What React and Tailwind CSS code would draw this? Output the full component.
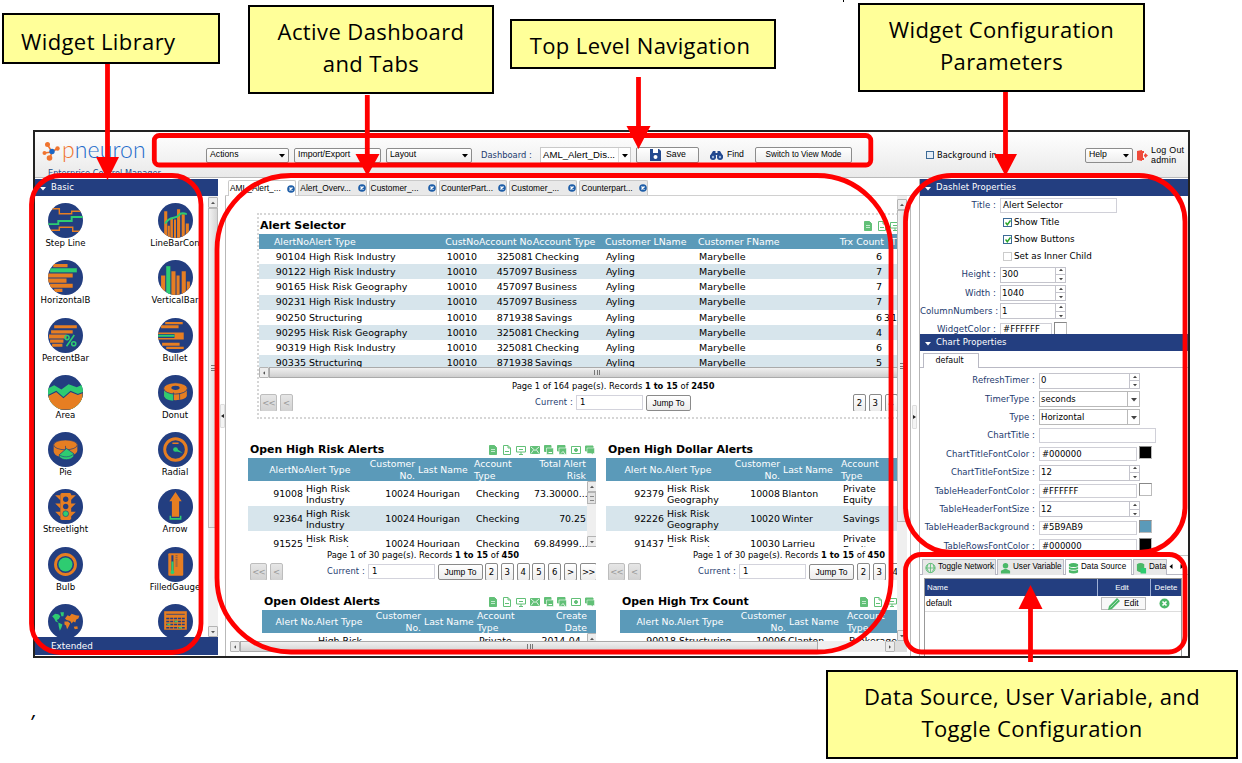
import React from "react";

const NAVY = "#233e80";
const ORANGE = "#e67e22";
const GREEN = "#2ecc71";

/* ---------- widget library icons (34 x 34) ---------- */

function Disc({ id, children }) {
  return (
    <svg width="35" height="35" viewBox="0 0 34 34" className="block">
      <clipPath id={id}>
        <circle cx="17" cy="17" r="17" />
      </clipPath>
      <g clipPath={`url(#${id})`}>
        <rect width="34" height="34" fill={NAVY} />
        {children}
      </g>
    </svg>
  );
}

const art = {
  step: (
    <g fill="none" strokeWidth="1.4">
      <path d="M4 5.500H11V10.500H23V8H33" stroke={ORANGE} />
      <path d="M0 20.500H10V17.500H23V13.500H34" stroke={GREEN} strokeWidth="1.900" />
      <path d="M3 26.500H11V23.500H24V27.500H31" stroke={ORANGE} />
    </g>
  ),
  linebar: (
    <g>
      <path d="M6 8h3v26H6zM12 15h2.500v19H12zM15.500 16h2v18h-2zM18.500 6h3v28h-3zM23 11h3v23h-3zM27 20h3v14h-3zM9.500 22h2v12h-2z" fill={ORANGE} />
      <path d="M7 20C11 12 17 16 20 12S26 11 28 10.500" stroke={GREEN} strokeWidth="1.900" fill="none" />
    </g>
  ),
  hbar: (
    <g fill={ORANGE}>
      <path d="M5 4H19V7H5zM0 13H24V17H0zM0 18H18V22H0zM2 23H24V27H2zM6 28H14V31H6z" />
      <rect x="2" y="8" width="26" height="4" fill={GREEN} />
    </g>
  ),
  vbar: (
    <g fill={ORANGE}>
      <path d="M3 15h4v19H3zM13 11h4v23h-4zM18 15h3v19h-3zM23 11h4v23h-4zM28 21h3v13h-3z" />
      <rect x="8" y="6" width="4" height="28" fill={GREEN} />
    </g>
  ),
  percent: (
    <g fill={ORANGE}>
      <path d="M6 7H28V10H6zM3 12H24V15H3zM1 16H18V20H1zM2 21H15V24H2zM4 25H14V28H4z" />
      <circle cx="18.500" cy="19" r="2" fill="none" stroke={GREEN} strokeWidth="1.500" />
      <circle cx="25" cy="25" r="2" fill="none" stroke={GREEN} strokeWidth="1.500" />
      <path d="M25.500 16.500 18 27.500" stroke={GREEN} strokeWidth="1.500" />
    </g>
  ),
  bullet: (
    <g fill={ORANGE}>
      <path d="M7 4H24V6H7zM3 7H20V10H3zM0 14H25V21H0zM4 24H21V27H4zM8 28H25V30H8z" />
      <path d="M0 15.500H16V19.500H0z" fill={NAVY} />
      <path d="M0 16.300H16V18.300H0z" fill={GREEN} />
    </g>
  ),
  area: (
    <g>
      <path d="M0 13 6 10 13 14 20 9 28 12 34 9V34H0z" fill={GREEN} />
      <path d="M0 20 8 16 15 22 22 16 29 19 34 17V34H0z" fill={ORANGE} stroke={NAVY} strokeWidth="1" />
    </g>
  ),
  donut: (
    <g>
      <path d="M6 13V20C6 26 28 26 28 20V13z" fill={ORANGE} />
      <path d="M6 15V20C6 23 10 25 15 25V18z" fill={GREEN} />
      <ellipse cx="17" cy="13" rx="11.500" ry="5.500" fill={ORANGE} stroke={NAVY} strokeWidth=".8" />
      <ellipse cx="17" cy="12.500" rx="4" ry="2" fill={NAVY} />
      <path d="M15 17V25M21 17.500V24" stroke={NAVY} strokeWidth=".7" />
    </g>
  ),
  pie: (
    <g>
      <path d="M5.500 12V19C6 22 9 24 12 24L17 18 23 23C26 22 28.500 20 28.500 18V12z" fill={ORANGE} />
      <ellipse cx="17" cy="12.500" rx="11.500" ry="4.800" fill={ORANGE} stroke={NAVY} strokeWidth=".7" />
      <path d="M17 13.500V18" stroke={NAVY} strokeWidth=".7" />
      <path d="M18 16 11 22V24C14 28 22 28 25 23.500V21z" fill={GREEN} stroke={NAVY} strokeWidth=".7" />
      <path d="M11 22C14 25 22 25 25 21" fill="none" stroke={NAVY} strokeWidth=".6" />
    </g>
  ),
  radial: (
    <g>
      <circle cx="17" cy="17" r="10.500" fill="none" stroke={ORANGE} strokeWidth="2.800" />
      <path d="M14 11H20" stroke={ORANGE} strokeWidth="1.500" />
      <circle cx="17" cy="17" r="2.300" fill={GREEN} />
      <path d="M17 15.500 24 20.500 16.500 18.500z" fill={GREEN} />
    </g>
  ),
  light: (
    <g fill={ORANGE}>
      <path d="M7 6H12V11zM7 14H12V19zM7 22H12V27zM27 6H22V11zM27 14H22V19zM27 22H22V27z" />
      <rect x="12" y="4" width="10.500" height="26" rx="1.500" />
      <circle cx="17.200" cy="10" r="2.600" fill={NAVY} />
      <circle cx="17.200" cy="17" r="2.600" fill={NAVY} />
      <circle cx="17.200" cy="24" r="2.800" fill={GREEN} stroke={NAVY} strokeWidth=".6" />
    </g>
  ),
  arrow: (
    <g>
      <path d="M17 3 23 12H20.500V27H13.500V12H11z" fill={ORANGE} />
      <path d="M12 26V29H22V26" stroke={GREEN} strokeWidth="1.500" fill="none" />
    </g>
  ),
  bulb: (
    <g>
      <circle cx="17" cy="17" r="9.700" fill="none" stroke={ORANGE} strokeWidth="2.800" />
      <circle cx="17" cy="17" r="6.800" fill={GREEN} />
    </g>
  ),
  gauge: (
    <g>
      <rect x="10" y="6" width="14.500" height="22" rx="1" fill={ORANGE} />
      <path d="M13 8H15V23H13z" fill={NAVY} />
      <path d="M13 14H15V25H13z" fill={GREEN} />
      <circle cx="14" cy="24.500" r="1.800" fill={GREEN} />
      <path d="M18 8V20" stroke={NAVY} strokeWidth="2" strokeDasharray="1 1" opacity=".6" />
    </g>
  ),
  map: (
    <g>
      <path d="M4 12 7 9.500 10 10 12 12 10.500 14.500 8.500 15.500 10 18 7.500 17 6 14z" fill={GREEN} />
      <path d="M12 8 15.500 8 15 12 13 12zM10 18 14 20 13 23 11.500 26 10.500 22z" fill={GREEN} />
      <path d="M16.500 14 19 11 21 12 23 9.500 27 11 30.500 11.500 29.500 14 27.500 15 26.500 18 24.500 17 23 19 21.500 16.500 18 15.500zM16 17H19.500L21.500 19 20 22 18.500 24.500 17.500 21 16 20zM25 22 28.500 21.500 29 24 26 24.500z" fill={ORANGE} />
    </g>
  ),
  grid: (
    <g>
      <rect x="6" y="7" width="22" height="18" fill={ORANGE} />
      <path d="M8 10H26" stroke={NAVY} strokeWidth=".8" />
      <path d="M8 14H26M8 17H26M8 20H26M8 23H26" stroke={NAVY} strokeWidth="1.500" strokeDasharray="3 .8" />
      <path d="M16 17H19M9 20H12M20 23H23" stroke={GREEN} strokeWidth="1.500" />
    </g>
  ),
};

const library = [
  ["step", "Step Line"], ["linebar", "LineBarCon"],
  ["hbar", "HorizontalB"], ["vbar", "VerticalBar"],
  ["percent", "PercentBar"], ["bullet", "Bullet"],
  ["area", "Area"], ["donut", "Donut"],
  ["pie", "Pie"], ["radial", "Radial"],
  ["light", "Streetlight"], ["arrow", "Arrow"],
  ["bulb", "Bulb"], ["gauge", "FilledGauge"],
  ["map", ""], ["grid", ""],
];

/* ---------- small shared pieces ---------- */

function Caret({ dir = "down", className = "" }) {
  const d = { down: "M0 1H6L3 4.500z", up: "M0 4H6L3 .5z", left: "M4.500 0V5L1.500 2.500z", right: "M1.500 0V5L4.500 2.500z" }[dir];
  return (
    <svg width="6" height="5" viewBox="0 0 6 5" className={"shrink-0 " + className}>
      <path d={d} fill="currentColor" />
    </svg>
  );
}

function ScrollButton({ dir }) {
  return (
    <div className="flex h-[11px] w-[10px] shrink-0 items-center justify-center rounded-[1px] border border-[#b4b4b4] bg-[#ececec] text-[#555]">
      <svg width="4" height="4" viewBox="0 0 6 5">
        <path d={{ down: "M0 1H6L3 4.500z", up: "M0 4H6L3 .5z", left: "M4.500 0V5L1.500 2.500z", right: "M1.500 0V5L4.500 2.500z" }[dir]} fill="currentColor" />
      </svg>
    </div>
  );
}

function Glyph({ children }) {
  return (
    <svg width="10" height="10" viewBox="0 0 10 10" className="shrink-0" fill="none" stroke="#62c077" strokeWidth="1">
      {children}
    </svg>
  );
}

const fillG = "#62c077";
const glyphs = [
  <Glyph key="a"><path d="M1.500 .5H6.500L8.500 2.500V9.500H1.500z" fill={fillG} /><path d="M3 4.500H7M3 6.500H7" stroke="#c5ead0" /></Glyph>,
  <Glyph key="b"><path d="M1.500 .5H6L8.500 3V9.500H1.500zM6 .5V3H8.500M3 6.500H7" /></Glyph>,
  <Glyph key="c"><path d="M.5 1.500H9.500V7H.5zM5 7V9.500M3 9.500H7M3 4.500H7" /></Glyph>,
  <Glyph key="d"><path d="M.5 1.500H9.500V8.500H.5z" fill={fillG} /><path d="M1 2 5 5.500 9 2M1 8.500 3.500 5M9 8.500 6.500 5" stroke="#fff" strokeWidth=".8" /></Glyph>,
  <Glyph key="e"><path d="M.5 .5H7V6.500H.5z" fill={fillG} /><path d="M2.500 3H9.500V9.500H2.500z" fill={fillG} stroke="#fff" strokeWidth=".6" /><path d="M4.500 7.500H8" stroke="#fff" /></Glyph>,
  <Glyph key="f"><path d="M.5 .5H8V6H.5z" fill={fillG} /><path d="M2 3H9.500V9.500H2z" fill={fillG} stroke="#fff" strokeWidth=".6" /><path d="M4 8.500 6 6.500 8 9" stroke="#fff" strokeWidth=".8" /></Glyph>,
  <Glyph key="g"><path d="M.5 1.500H9.500V8.500H.5z" /><circle cx="5" cy="5" r="1.500" fill={fillG} /></Glyph>,
  <Glyph key="h"><path d="M.5 1H8V6H.5z" fill={fillG} /><path d="M2 3H9.500V8.500H8V9.500L6 8.500H2z" fill={fillG} stroke="#fff" strokeWidth=".5" /></Glyph>,
];

function PageButton({ children, off, wide }) {
  return (
    <div
      className={
        "flex h-[18px] shrink-0 items-center justify-center rounded-[2px] border text-[8.500px] " +
        (wide ? "w-[17px] tracking-[-0.800px] " : "w-[13px] ") +
        (off
          ? "border-[#bdbdbd] bg-gradient-to-b from-[#e6e6e6] to-[#d2d2d2] text-[#999]"
          : "border-[#8a8a8a] bg-gradient-to-b from-white to-[#ececec] text-black")
      }
    >
      {children}
    </div>
  );
}

function Pager({ lead, pages, gap }) {
  return (
    <div className="flex h-[17px] w-[700px] items-start overflow-hidden font-['DejaVu_Sans']">
      <PageButton off wide>&lt;&lt;</PageButton>
      <div className="ml-[3px]"><PageButton off>&lt;</PageButton></div>
      <div className={"flex h-[17px] shrink-0 items-center justify-end text-[8.300px] tracking-[0.150px] whitespace-nowrap text-[#1c3a6e] " + lead}>Current :</div>
      <div className="mt-px ml-[3px] flex h-[15px] w-[67px] shrink-0 items-center border border-[#d3d3dc] bg-white pl-[3px] text-[8.500px]">1</div>
      <div className="mt-px ml-[3px] flex h-[16px] w-[45px] shrink-0 items-center justify-center rounded-[2px] border border-[#8a8a8a] bg-gradient-to-b from-white to-[#ececec] font-['Liberation_Sans'] text-[8.500px]">Jump To</div>
      <div className={"flex gap-[2.800px] " + gap}>
        {pages.map((p) => <PageButton key={p} wide={p === ">>"}>{p}</PageButton>)}
      </div>
    </div>
  );
}

/* ---------- dashboard widgets ---------- */

const selectorCols = "grid grid-cols-[50px_135px_35px_54px_72px_92px_132px_56px_30px]";
const selectorRows = [
  ["90104", "High Risk Industry", "325081", "Checking", "6"],
  ["90122", "High Risk Industry", "457097", "Business", "7"],
  ["90165", "Hisk Risk Geography", "457097", "Business", "7"],
  ["90231", "High Risk Industry", "457097", "Business", "7"],
  ["90250", "Structuring", "871938", "Savings", "6"],
  ["90295", "Hisk Risk Geography", "325081", "Checking", "4"],
  ["90319", "High Risk Industry", "325081", "Checking", "6"],
  ["90335", "Structuring", "871938", "Savings", "5"],
];

function AlertSelector() {
  return (
    <div className="mt-[17px] ml-[31px] h-[206px] w-[660px] shrink-0 border-2 border-dotted border-[#d6d6d6]">
      <div className="flex h-[19px] items-center pt-[2px]">
        <div className="w-[604px] pl-[1px] text-[11px] leading-[14px] font-bold">Alert Selector</div>
        <div className="flex gap-[3.500px]">{glyphs.slice(0, 3)}</div>
      </div>
      <div className={selectorCols + " h-[15px] items-center bg-[#5b9ab9] text-[9.400px] leading-none whitespace-nowrap text-white"}>
        <span className="text-right">AlertNo</span>
        <span>Alert Type</span>
        <span className="text-right">CustNo</span>
        <span className="text-right tracking-[-0.050px]">Account No.</span>
        <span>Account Type</span>
        <span>Customer LName</span>
        <span className="pl-px">Customer FName</span>
        <span className="pr-px text-right">Trx Count</span>
        <span className="pl-[6px]">T</span>
      </div>
      <div className="h-[118px] overflow-hidden">
        {selectorRows.map((r, i) => (
          <div key={i} className={selectorCols + " h-[15.200px] items-center text-[9.500px] leading-none whitespace-nowrap " + (i % 2 ? "bg-[#d7e5ec]" : "bg-white")}>
            <span className="pr-[3px] text-right">{r[0]}</span>
            <span>{r[1]}</span>
            <span className="pr-[2px] text-right">10010</span>
            <span className="text-right">{r[2]}</span>
            <span className="pl-[2px]">{r[3]}</span>
            <span className="pl-[1px]">Ayling</span>
            <span className="pl-[2px]">Marybelle</span>
            <span className="pr-[3px] text-right">{r[4]}</span>
            <span className="-ml-[1px] tracking-[1px]">{i === 4 ? "31" : ""}</span>
          </div>
        ))}
      </div>
      <div className="flex h-[11px] items-center">
        <ScrollButton dir="left" />
        <div className="flex h-[11px] flex-1 items-center border border-[#aaa] bg-gradient-to-b from-[#f0f0f0] to-[#cfcfcf] pl-[324px]">
          <div className="h-[5px] w-[6px] border-x border-[#777]"><div className="mx-auto h-full w-px bg-[#777]" /></div>
        </div>
      </div>
      <div className="flex h-[16px] items-center pl-[253px] text-[8.350px] whitespace-pre">
        Page 1 of 164 page(s). Records <b>1 to 15</b> of <b>2450</b>
      </div>
      <div className="pl-px">
        <Pager lead="w-[280px]" pages={["2", "3", "4"]} gap="ml-[162px]" />
      </div>
    </div>
  );
}

function SmallTable({ title, width, cols, heads, rows, icons, iconPad, bodyH, scroll }) {
  return (
    <div className={width}>
      <div className="flex h-[18px] items-center justify-between pt-px">
        <div className="pl-[2px] text-[10.880px] leading-[14px] font-bold whitespace-nowrap">{title}</div>
        <div className={"flex gap-[3.800px] " + iconPad}>{glyphs.slice(0, icons)}</div>
      </div>
      <div className={"grid h-[23px] items-center bg-[#5b9ab9] text-[9.300px] leading-[11.500px] whitespace-pre text-white " + cols}>
        {heads.map((h, i) => (
          <span key={i} className={i === 0 || i === 2 || i === 5 ? "text-right" : ""}>{h}</span>
        ))}
      </div>
      <div className={"flex overflow-hidden " + bodyH}>
        <div className="flex-1">
          {rows.map((r, n) => (
            <div key={n} className={"grid h-[25px] items-center text-[9.400px] leading-[11px] whitespace-pre " + cols + (n % 2 ? " bg-[#d7e5ec]" : "")}>
              {r.map((c, i) => (
                <span key={i} className={i === 0 || i === 2 || i === 5 ? (i === 0 ? "pr-px text-right" : "text-right") : "pl-[2px]"}>{c}</span>
              ))}
            </div>
          ))}
        </div>
        {scroll && (
          <div className="flex w-[9px] flex-col bg-[#efefef]">
            <ScrollButton dir="up" />
            <div className="flex h-[12px] items-center justify-center border border-[#b4b4b4] bg-[#e2e2e2]"><div className="h-[5px] w-[4px] border-y border-[#888]" /></div>
            <div className="flex-1" />
            <ScrollButton dir="down" />
          </div>
        )}
      </div>
    </div>
  );
}

const custNo = "Customer\nNo.";
const acct = "Account\nType";
const c1 = "grid-cols-[56px_65px_46px_59px_60px_52px]";
const c2 = "grid-cols-[59px_67px_48px_61px_60px]";
const c3 = "grid-cols-[54px_58px_47px_56px_56px_54px]";
const c4 = "grid-cols-[57px_63px_46px_61px_60px]";

function Records({ pad }) {
  return (
    <div className={"flex h-[16px] items-center text-[8.400px] whitespace-pre " + pad}>
      Page 1 of 30 page(s). Records <b>1 to 15</b> of <b>450</b>
    </div>
  );
}

function Canvas() {
  return (
    <div className="flex h-[445px] w-[671px] flex-col overflow-hidden bg-white font-['DejaVu_Sans',sans-serif] text-black">
      <AlertSelector />
      <div className="mt-[21px] ml-[22px] flex w-[700px] gap-[10px]">
        <div className="w-[348px]">
          <SmallTable
            title="Open High Risk Alerts" width="w-[348px]" cols={c1} icons={8} iconPad="pr-[1px]" bodyH="h-[66px]" scroll
            heads={["AlertNo", "Alert Type", custNo, " Last Name", acct, "Total Alert\nRisk"]}
            rows={[
              ["91008", "High Risk\nIndustry", "10024", "Hourigan", "Checking", "73.30000..."],
              ["92364", "High Risk\nIndustry", "10024", "Hourigan", "Checking", "70.25"],
              ["91525", "Hisk Risk\nGeography", "10024", "Hourigan", "Checking", "69.84999..."],
            ]}
          />
          <Records pad="pl-[79px]" />
          <div className="w-[348px] overflow-hidden pl-[2px]"><Pager lead="w-[82px]" pages={["2", "3", "4", "5", "6", ">", ">>"]} gap="ml-[2px]" /></div>
          <div className="mt-[12px] ml-[14px]">
            <SmallTable
              title="Open Oldest Alerts" width="w-[334px]" cols={c3} icons={8} iconPad="pr-[1px]" bodyH="h-[20px]" scroll
              heads={["Alert No.", "Alert Type", custNo, " Last Name", acct, "Create\nDate"]}
              rows={[["", "High Risk\nIndustry", "", "", "Private\nEquity", "2014-04- \n "]]}
            />
          </div>
        </div>
        <div className="w-[342px]">
          <SmallTable
            title="Open High Dollar Alerts" width="w-[320px]" cols={c2} icons={0} iconPad="" bodyH="h-[66px]"
            heads={["Alert No.", "Alert Type", custNo, " Last Name", acct]}
            rows={[
              ["92379", "Hisk Risk\nGeography", "10008", "Blanton", "Private\nEquity"],
              ["92226", "Hisk Risk\nGeography", "10020", "Winter", "Savings"],
              ["91437", "Hisk Risk\nGeography", "10030", "Larrieu", "Private\nEquity"],
            ]}
          />
          <Records pad="pl-[87px]" />
          <div className="pl-[2px]"><Pager lead="w-[95px]" pages={["2", "3", "4"]} gap="ml-[3px]" /></div>
          <div className="mt-[12px] ml-[14px]">
            <SmallTable
              title="Open High Trx Count" width="w-[320px]" cols={c4} icons={3} iconPad="pr-[43px]" bodyH="h-[20px]"
              heads={["Alert No.", "Alert Type", custNo, " Last Name", acct]}
              rows={[["90018\n ", "Structuring\n ", "10006\n ", "Clanton\n ", "Brokerage\n "]]}
            />
          </div>
        </div>
      </div>
    </div>
  );
}

/* ---------- top bar ---------- */

function NavSelect({ label, w }) {
  return (
    <div className={"flex h-[15px] items-center justify-between rounded-[2px] border border-[#8c8c8c] bg-gradient-to-b from-white to-[#eee] px-[3px] " + w}>
      <span>{label}</span>
      <Caret />
    </div>
  );
}

function TopBar() {
  return (
    <header className="flex h-[46px] shrink-0 border-b border-[#b9b9b9] bg-gradient-to-b from-white to-[#e9e9e9] font-['Liberation_Sans',sans-serif] text-[8.700px] text-black">
      <div className="flex w-[171px] flex-col overflow-hidden pl-[7px]">
        <div className="flex h-[37px] items-center">
          <svg width="19" height="21" viewBox="0 0 19 21" className="mt-[1px]" fill="none">
            <path d="M5 3 10 11 16 7M10 11 2 12M10 11 8 17" stroke="#f0742f" strokeWidth="1.600" />
            <circle cx="5.500" cy="3.500" r="2.500" fill="#f0742f" />
            <circle cx="15.500" cy="7.500" r="2.200" fill="#f0742f" />
            <circle cx="2.500" cy="12" r="2" fill="#f0742f" />
            <circle cx="7.500" cy="17" r="2.800" fill="#f0742f" />
            <circle cx="10" cy="10.500" r="2.700" fill="#1b66c4" />
          </svg>
          <div className="-mt-[3px] ml-[1px] font-['Lato'] text-[23px] leading-none font-light tracking-[0.100px] text-[#1f6dcb]">
            <span className="text-[#f0742f]">p</span>neuron
          </div>
        </div>
        <div className="-mt-px h-[8px] overflow-hidden pl-[6px] font-['DejaVu_Sans'] text-[8.200px] leading-[10px] whitespace-nowrap text-[#1d4a86]">Enterprise Control Manager</div>
      </div>
      <div className="mt-[15px] flex h-[16px] items-center gap-[5px]">
        <NavSelect label="Actions" w="w-[83px]" />
        <NavSelect label="Import/Export" w="w-[87px]" />
        <NavSelect label="Layout" w="w-[86px]" />
      </div>
      <div className="mt-[15px] ml-[9px] flex h-[16px] items-center">
        <span className="w-[59px] font-['DejaVu_Sans'] text-[8.350px] whitespace-nowrap text-[#1c3a6e]">Dashboard :</span>
        <div className="flex h-[16px] w-[91px] items-center border border-[#c9c9c9] bg-white">
          <span className="w-[77px] pl-[2px] text-[9.600px] whitespace-nowrap">AML_Alert_Dis...</span>
          <span className="flex h-full flex-1 items-center justify-center border-l border-[#ddd]"><Caret /></span>
        </div>
        <div className="ml-[5px] flex h-[16px] w-[63px] items-center rounded-[2px] border border-[#8c8c8c] bg-gradient-to-b from-white to-[#eee] pl-[13px]">
          <svg width="11" height="12" viewBox="0 0 11 12"><path d="M0 0H9L11 2V12H0z" fill="#23498f" /><path d="M3 0H8V4H3z" fill="#fff" /><circle cx="5.500" cy="8" r="2" fill="#fff" /></svg>
          <span className="ml-[5px]">Save</span>
        </div>
        <svg width="13" height="10" viewBox="0 0 13 10" className="ml-[11px]" fill="#23498f"><path d="M3 1H5.500V3H7.500V1H10L13 6V8H7.500V5H5.500V8H0V6z" /><circle cx="3" cy="7" r="3" /><circle cx="10" cy="7" r="3" /><circle cx="3" cy="7" r="1.200" fill="#9cb8df" /><circle cx="10" cy="7" r="1.200" fill="#9cb8df" /></svg>
        <span className="ml-[4px] w-[22px]">Find</span>
        <div className="ml-[6px] flex h-[16px] w-[97px] items-center justify-center rounded-[2px] border border-[#8c8c8c] bg-gradient-to-b from-white to-[#eee] text-[8.200px] whitespace-nowrap">Switch to View Mode</div>
      </div>
      <div className="mt-[15px] ml-[74px] flex h-[16px] items-center">
        <span className="h-[8px] w-[8px] border border-[#3c6a96] bg-[#e6eef6]" />
        <span className="ml-[3px] w-[62px] overflow-hidden font-['DejaVu_Sans'] text-[8.300px] whitespace-nowrap">Background in</span>
      </div>
      <div className="mt-[15px] ml-[86px] flex h-[16px] items-center">
        <NavSelect label="Help" w="w-[48px]" />
        <svg width="11" height="11" viewBox="0 0 11 11" className="ml-[4px]" fill="#ef4a3a"><path d="M0 1 5 0V11L0 10zM5 1H7V3H6V8H7V10H5zM7 4.500H8V3L11 5.500 8 8V6.500H7z" /></svg>
        <div className="ml-[3px] text-[8.900px] leading-[10px] tracking-[0.250px] whitespace-nowrap">Log Out<br />admin</div>
      </div>
    </header>
  );
}

/* ---------- property panels ---------- */

function PanelBar({ title }) {
  return (
    <div className="flex h-[17px] shrink-0 items-center bg-[#233e80] pl-[5px] font-['DejaVu_Sans'] text-[8.500px] text-white">
      <Caret className="mt-px" />
      <span className="ml-[5px] tracking-[0.100px]">{title}</span>
    </div>
  );
}

function Spin({ value, w }) {
  return (
    <div className={"flex h-[16px] border border-[#c4c4cc] bg-white " + w}>
      <span className="flex flex-1 items-center pl-[1px]">{value}</span>
      <span className="flex w-[10px] flex-col items-center justify-around border-l border-[#c4c4cc] text-[#444]">
        <svg width="4" height="4" viewBox="0 0 6 5"><path d="M0 4H6L3 .5z" fill="currentColor" /></svg>
        <i className="block h-px w-full bg-[#c4c4cc]" />
        <svg width="4" height="4" viewBox="0 0 6 5"><path d="M0 1H6L3 4.500z" fill="currentColor" /></svg>
      </span>
    </div>
  );
}

function Combo({ value }) {
  return (
    <div className="flex h-[16px] w-[101px] border border-[#b9b9b9] bg-white">
      <span className="flex flex-1 items-center pl-[1px]">{value}</span>
      <span className="flex w-[12px] items-center justify-center border-l border-[#b9b9b9] text-[#444]"><Caret /></span>
    </div>
  );
}

function Swatch({ value, w, color }) {
  return (
    <div className="flex">
      <div className={"flex h-[14px] items-center border border-[#cfcfd6] pl-[2px] " + w}>{value}</div>
      <div className={"-mt-px ml-[2px] h-[13px] w-[13px] border border-t-[#888] border-l-[#888] border-[#bbb] " + color} />
    </div>
  );
}

function Field({ label, labelW, children }) {
  return (
    <div className="flex h-[18.400px] shrink-0 items-center">
      <span className={"shrink-0 text-right tracking-[0.050px] whitespace-nowrap text-[#1c3a6e] " + labelW}>{label} :</span>
      <div className="ml-[4px]">{children}</div>
    </div>
  );
}

function Check({ label, on }) {
  return (
    <div className="flex h-[17px] shrink-0 items-center pl-[83px]">
      <span className={"flex h-[9px] w-[9px] items-center justify-center border bg-white " + (on ? "border-[#3c6a96]" : "border-[#ccc]")}>
        {on && <svg width="6" height="6" viewBox="0 0 6 6"><path d="M.5 2.500 2.300 4.800 5.500 .5" stroke="#2ba52b" strokeWidth="1.500" fill="none" /></svg>}
      </span>
      <span className="ml-[2px] text-[8.800px]">{label}</span>
    </div>
  );
}

function Properties() {
  return (
    <aside className="flex w-[269px] shrink-0 flex-col border-l border-[#b5b5b5] bg-white font-['DejaVu_Sans',sans-serif] text-[8.800px] text-black">
      <PanelBar title="Dashlet Properties" />
      <div className="flex h-[138px] flex-col overflow-hidden text-[8.600px]">
        <Field label="Title" labelW="w-[76px]"><div className="flex h-[15px] w-[117px] items-center border border-[#d0d0d8] pl-[2px] text-[8.800px]">Alert Selector</div></Field>
        <Check label="Show Title" on />
        <Check label="Show Buttons" on />
        <Check label="Set as Inner Child" />
        <Field label="Height" labelW="w-[76px]"><Spin value="300" w="w-[66px]" /></Field>
        <Field label="Width" labelW="w-[76px]"><Spin value="1040" w="w-[66px]" /></Field>
        <Field label="ColumnNumbers" labelW="w-[76px] tracking-[-0.050px]"><Spin value="1" w="w-[66px]" /></Field>
        <Field label="WidgetColor" labelW="w-[76px]"><Swatch value="#FFFFFF" w="w-[52px]" color="bg-white" /></Field>
      </div>
      <PanelBar title="Chart Properties" />
      <div className="flex h-[17px] shrink-0 items-end border-b border-[#b9b9c4] pl-[3px]">
        <div className="-mb-px flex h-[15px] w-[56px] items-center justify-center rounded-t-[1px] border border-b-0 border-[#b9b9c4] bg-white pr-[3px] text-[8px]">default</div>
      </div>
      <div className="flex h-[188px] shrink-0 flex-col overflow-hidden border-b border-[#c5c5c5] pt-[3.500px] text-[8.500px]">
        <Field label="RefreshTimer" labelW="w-[115px]"><Spin value="0" w="w-[101px]" /></Field>
        <Field label="TimerType" labelW="w-[115px]"><Combo value="seconds" /></Field>
        <Field label="Type" labelW="w-[115px]"><Combo value="Horizontal" /></Field>
        <Field label="ChartTitle" labelW="w-[115px]"><div className="h-[15px] w-[117px] border border-[#d0d0d8]" /></Field>
        <Field label="ChartTitleFontColor" labelW="w-[115px]"><Swatch value="#000000" w="w-[98px]" color="bg-black" /></Field>
        <Field label="ChartTitleFontSize" labelW="w-[115px]"><Spin value="12" w="w-[101px]" /></Field>
        <Field label="TableHeaderFontColor" labelW="w-[115px]"><Swatch value="#FFFFFF" w="w-[98px]" color="bg-white" /></Field>
        <Field label="TableHeaderFontSize" labelW="w-[115px]"><Spin value="12" w="w-[101px]" /></Field>
        <Field label="TableHeaderBackground" labelW="w-[115px]"><Swatch value="#5B9AB9" w="w-[98px]" color="bg-[#5b9ab9]" /></Field>
        <Field label="TableRowsFontColor" labelW="w-[115px]"><Swatch value="#000000" w="w-[98px]" color="bg-black" /></Field>
      </div>
      <DataTabs />
    </aside>
  );
}

function DataTab({ label, w, active, children }) {
  return (
    <div className={"-mb-px flex h-[16px] shrink-0 items-center overflow-hidden rounded-t-[1px] border border-b-0 border-[#b9b9c4] pl-[2px] " + w + (active ? " bg-white" : " bg-[#e8e8e8]")}>
      <svg width="11" height="12" viewBox="0 0 12 12" className="shrink-0">{children}</svg>
      <span className="ml-[2px] whitespace-nowrap">{label}</span>
    </div>
  );
}

function DataTabs() {
  const g = "#4bb868";
  return (
    <div className="flex flex-1 flex-col overflow-hidden font-['Liberation_Sans',sans-serif] text-[8.500px]">
      <div className="mt-[2px] flex h-[17px] shrink-0 items-end gap-px border-b border-[#b9b9c4] pl-[2px] text-[8.150px]">
        <DataTab label="Toggle Network" w="w-[74px]">
          <circle cx="6" cy="6" r="5" fill="none" stroke={g} /><path d="M1 6H11M6 1V11M3 2.500Q.5 6 4 10M9 2.500Q11.500 6 8 10" stroke={g} fill="none" strokeWidth=".8" />
        </DataTab>
        <DataTab label="User Variable" w="w-[67px]">
          <circle cx="6" cy="3.500" r="3" fill={g} /><path d="M1 12V9L5 7H7L11 9V12z" fill={g} />
        </DataTab>
        <DataTab label="Data Source" w="w-[67px]" active>
          <path d="M1 2Q6-1 11 2V4Q6 6 1 4zM1 5Q6 7 11 5V7Q6 9 1 7zM1 8Q6 10 11 8V11Q6 13 1 11z" fill={g} />
        </DataTab>
        <DataTab label="Data" w="w-[34px]">
          <path d="M1 2Q5-1 9 2V9Q5 12 1 9z" fill={g} /><path d="M5 6H11V12H5z" fill={GREEN} />
        </DataTab>
        <div className="flex h-[16px] shrink-0 items-center gap-[5px] text-black"><Caret dir="left" /><Caret dir="right" /></div>
      </div>
      <div className="mt-[3px] mr-[6px] ml-[4px] flex flex-1 flex-col border-x border-t border-[#999]">
        <div className="grid h-[17px] shrink-0 grid-cols-[172px_54px_31px] items-center bg-[#233e80] text-[7.900px] text-white">
          <span className="pl-[2px]">Name</span>
          <span className="flex h-full items-center justify-center border-x border-[#9fb0d5] pr-[4px]">Edit</span>
          <span className="-ml-px text-center">Delete</span>
        </div>
        <div className="grid h-[16px] shrink-0 grid-cols-[172px_54px_31px] items-center border-b border-[#ddd]">
          <span className="pl-[1px]">default</span>
          <span className="ml-[4px] flex h-[13px] w-[45px] items-center border border-[#bbb] bg-[#f8f8f8] pl-[6px]">
            <svg width="12" height="12" viewBox="0 0 12 12"><path d="M0 12 1 8 9 0 12 3 4 11z" fill={g} /><path d="M2.500 9.500 10 2" stroke="#c8ecd2" strokeWidth=".8" /></svg>
            <span className="ml-[4px]">Edit</span>
          </span>
          <span className="-ml-[4px] flex justify-center">
            <svg width="11" height="11" viewBox="0 0 11 11"><circle cx="5.500" cy="5.500" r="5" fill={g} /><path d="M3.500 3.500 7.500 7.500M7.500 3.500 3.500 7.500" stroke="#fff" strokeWidth="1.700" /></svg>
          </span>
        </div>
      </div>
    </div>
  );
}

/* ---------- left and centre columns ---------- */

function Library() {
  return (
    <aside className="flex w-[183px] shrink-0 flex-col bg-white font-['DejaVu_Sans',sans-serif]">
      <PanelBar title="Basic" />
      <div className="flex h-[441px] shrink-0">
        <div className="grid w-[173px] grid-cols-[61px_110px] content-start overflow-hidden pt-[7px]">
          {library.map(([k, label]) => (
            <div key={k} className="flex h-[57.300px] flex-col items-center overflow-visible odd:w-[61px] even:w-[158px]">
              <Disc id={"disc-" + k}>{art[k]}</Disc>
              <span className="text-[8.600px] leading-[11px] whitespace-nowrap">{label}</span>
            </div>
          ))}
        </div>
        <div className="flex w-[10px] flex-col bg-[#f0f0f0] pt-px">
          <ScrollButton dir="up" />
          <div className="flex h-[320px] items-center justify-center border border-[#b9b9b9] bg-gradient-to-r from-[#f2f2f2] to-[#d6d6d6]">
            <div className="h-[6px] w-[4px] border-y border-[#777]"><div className="mt-[1.500px] h-px bg-[#777]" /></div>
          </div>
          <div className="flex-1" />
          <ScrollButton dir="down" />
        </div>
      </div>
      <div className="flex h-[18px] shrink-0 items-center bg-[#233e80] pt-px pl-[16px] text-[8.800px] text-white">Extended</div>
    </aside>
  );
}

const tabNames = ["AML_Alert_...", "Alert_Overv...", "Customer_...", "CounterPart...", "Customer_...", "Counterpart..."];

function Center() {
  return (
    <main className="flex w-[686px] shrink-0 flex-col bg-white">
      <div className="flex h-[17px] shrink-0 items-end gap-[2px] border-b border-[#d0d0d0] pl-[3px] font-['Liberation_Sans',sans-serif] text-[8.400px]">
        {tabNames.map((t, i) => (
          <div key={i} className={"flex w-[68.300px] items-center justify-between rounded-t-[2px] border border-b-0 border-[#c9c9c9] pl-[1px] " + (i ? "h-[15px] bg-[#e9e9e9]" : "-mb-px h-[16px] bg-white")}>
            <span>{t}</span>
            <svg width="8" height="8" viewBox="0 0 9 9"><circle cx="4.500" cy="4.500" r="4.300" fill="#1e5ea8" /><path d="M2.800 2.800 6.200 6.200M6.200 2.800 2.800 6.200" stroke="#fff" strokeWidth="1.500" /></svg>
          </div>
        ))}
      </div>
      <div className="flex h-[445px] shrink-0 border-l border-[#b9b9b9]">
        <Canvas />
        <div className="flex w-[10px] flex-col bg-[#efefef] pt-[3px]">
          <ScrollButton dir="up" />
          <div className="flex h-[312px] items-center justify-center border border-[#b9b9b9] bg-gradient-to-r from-[#f2f2f2] to-[#d9d9d9]">
            <div className="h-[6px] w-[4px] border-y border-[#777]"><div className="mt-[1.500px] h-px bg-[#777]" /></div>
          </div>
          <div className="flex-1" />
          <ScrollButton dir="down" />
        </div>
        <div className="w-[4px] border-r border-[#b9b9b9]" />
      </div>
      <div className="flex flex-1 items-start border-l border-[#b9b9b9] pl-[4px]">
        <ScrollButton dir="left" />
        <div className="flex h-[11px] w-[579px] items-center justify-center border border-[#aaa] bg-gradient-to-b from-[#f0f0f0] to-[#d4d4d4] pl-[2px]">
          <div className="h-[5px] w-[6px] border-x border-[#777]"><div className="mx-auto h-full w-px bg-[#777]" /></div>
        </div>
        <div className="h-[11px] w-[67px] bg-[#efefef]" />
        <ScrollButton dir="right" />
        <div className="h-[11px] w-[12px] bg-[#ddd]" />
        <div className="h-full w-[4px] border-r border-[#b9b9b9]" />
      </div>
    </main>
  );
}

function Splitter({ dir, w, pad }) {
  return (
    <div className={"flex shrink-0 bg-white " + w + " " + pad}>
      <div className="flex h-[24px] w-[5px] items-center rounded-[1px] border border-[#ddd] bg-[#f4f4f4]">
        <svg width="3" height="4" viewBox="0 0 3 4"><path d={dir === "left" ? "M3 0V4L0 2z" : "M0 0V4L3 2z"} fill="#222" /></svg>
      </div>
    </div>
  );
}

/* ---------- callouts over the application ---------- */

function Callout({ className, children }) {
  return (
    <div className={"absolute flex flex-col justify-center border-2 border-black bg-[#ffff99] font-['Open_Sans',sans-serif] text-[22px] leading-[32px] tracking-[0.400px] whitespace-nowrap text-black " + className}>
      {children}
    </div>
  );
}

function Marks() {
  return (
    <svg className="pointer-events-none absolute top-0 left-0" width="1242" height="763" viewBox="0 0 1242 763">
      <g fill="none" stroke="#f00" strokeWidth="4.800">
        <rect x="154.300" y="135.500" width="716.500" height="29.500" rx="5" />
        <rect x="31.500" y="175.500" width="169.500" height="477" rx="29" />
        <rect x="217" y="175.500" width="674" height="476.500" rx="74" />
        <rect x="905.500" y="175.500" width="279.500" height="377" rx="46" />
        <rect x="905.500" y="554.500" width="279.500" height="97.500" rx="16" />
        <path d="M107.500 64V160M367.300 95V157M638.500 77V129M1005.500 91V157M1030.500 662V606" />
      </g>
      <path d="M96 157H119L107.500 180zM355.500 154H379.500L367.300 176zM626.500 126H650.500L638.500 149zM994 154H1017L1005.500 176zM1018.500 609H1042.500L1030.500 585z" fill="#f00" />
    </svg>
  );
}

export default function App() {
  return (
    <div className="relative h-[763px] w-[1242px] overflow-hidden bg-white pt-[130px] pl-[33px]">
      <div className="flex h-[528px] w-[1157px] flex-col overflow-hidden border-2 border-[#222] bg-white">
        <TopBar />
        <div className="flex flex-1 overflow-hidden pt-px">
          <Library />
          <Splitter dir="left" w="w-[7px]" pad="pt-[225px] pl-[2px]" />
          <Center />
          <Splitter dir="right" w="w-[8px]" pad="pt-[226px] pl-[1px]" />
          <Properties />
        </div>
      </div>
      <Marks />
      <Callout className="top-[13px] left-[2px] h-[51px] w-[218px] pt-[4px] pl-[17px]">Widget Library</Callout>
      <Callout className="top-[5px] left-[248px] h-[89px] w-[246px] pb-[5px] text-center">Active Dashboard<br />and Tabs</Callout>
      <Callout className="top-[19px] left-[510px] h-[50px] w-[266px] pt-[2px] pr-[6px] text-center">Top Level Navigation</Callout>
      <Callout className="top-[3px] left-[858px] h-[89px] w-[287px] pb-[5px] text-center">Widget Configuration<br />Parameters</Callout>
      <Callout className="top-[670px] left-[826px] h-[89px] w-[412px] pb-[5px] text-center">Data Source, User Variable, and<br />Toggle Configuration</Callout>
      <div className="absolute top-0 left-[843px] h-[2px] w-px bg-black" />
      <div className="absolute top-[696px] left-[32px] font-['Open_Sans'] text-[20px] leading-[28px] text-black italic">,</div>
    </div>
  );
}
